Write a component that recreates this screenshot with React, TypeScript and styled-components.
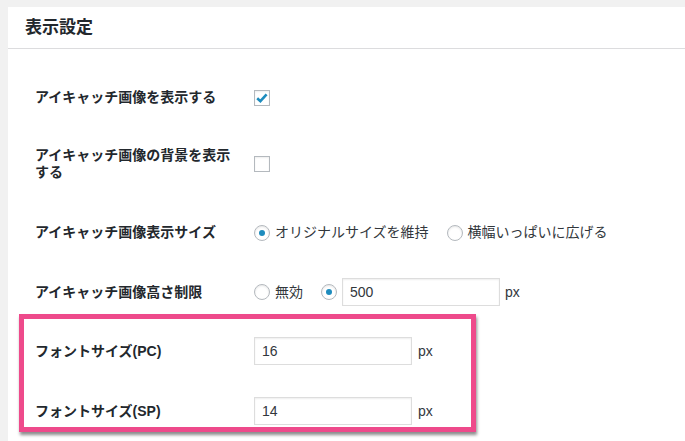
import React from 'react';
import styled, { createGlobalStyle } from 'styled-components';

const GlobalStyle = createGlobalStyle`
    html, body {
        margin: 0;
        padding: 0;
        background: #f1f1f1;
    }
    body {
        font-family: "Liberation Sans", "Noto Sans CJK JP", sans-serif;
        font-size: 14px;
        color: #444;
    }
`

type RowProps = { $py: string }

export default function App() {
    return (
        <>
            <GlobalStyle />
            <Panel>
                <Header>
                    <Title>表示設定</Title>
                </Header>

                <Form>
                    <Row $py='40px 0 22px'>
                        <Label>アイキャッチ画像を表示する</Label>
                        <Controls>
                            <Checkbox $checked>
                                <svg width='14' height='14' viewBox='0 0 14 14'>
                                    <path d='M2.2 7.2 L5.4 10.2 L11.6 3.4' fill='none' stroke='#1e8cbe' strokeWidth='2.6' />
                                </svg>
                            </Checkbox>
                        </Controls>
                    </Row>

                    <Row $py='19px 0 19px'>
                        <Label>アイキャッチ画像の背景を表示する</Label>
                        <Controls>
                            <Checkbox />
                        </Controls>
                    </Row>

                    <Row $py='24px 0 23px'>
                        <Label>アイキャッチ画像表示サイズ</Label>
                        <Controls>
                            <Option>
                                <Radio $checked />
                                <OptionText>オリジナルサイズを維持</OptionText>
                            </Option>
                            <Option>
                                <Radio />
                                <OptionText>横幅いっぱいに広げる</OptionText>
                            </Option>
                        </Controls>
                    </Row>

                    <Row $py='14px 0 8px'>
                        <Label>アイキャッチ画像高さ制限</Label>
                        <Controls>
                            <Option>
                                <Radio />
                                <OptionText>無効</OptionText>
                            </Option>
                            <Option>
                                <Radio $checked />
                                <TextInput>500</TextInput>
                                <Unit>px</Unit>
                            </Option>
                        </Controls>
                    </Row>

                    <Highlight>
                        <Row $py='18px 0 16px'>
                            <Label>フォントサイズ(PC)</Label>
                            <Option>
                                <TextInput>16</TextInput>
                                <Unit $gap={1}>px</Unit>
                            </Option>
                        </Row>
                        <Row $py='16px 0 2px'>
                            <Label>フォントサイズ(SP)</Label>
                            <Option>
                                <TextInput>14</TextInput>
                                <Unit $gap={1}>px</Unit>
                            </Option>
                        </Row>
                    </Highlight>
                </Form>
            </Panel>
        </>
    );
}

const Panel = styled.div`
    margin: 7px 0 0 8px;
    min-height: calc(100vh - 7px);
    background: #fff;
`

const Header = styled.div`
    height: 41px;
    padding-left: 17px;
    display: flex;
    align-items: center;
    border-bottom: 1px solid #dcdcde;
`

const Title = styled.h2`
    margin: 0;
    font-size: 17px;
    font-weight: 600;
    color: #23282d;
    line-height: 1;
    margin-top: -1px;
`

const Form = styled.div`
    padding-left: 27px;
`

const Row = styled.div<RowProps>`
    display: grid;
    grid-template-columns: 219px auto;
    align-items: center;
    padding: ${p => p.$py};
`

const Label = styled.div`
    width: 200px;
    font-size: 14px;
    font-weight: 700;
    line-height: 17px;
    color: #23282d;
`

const Controls = styled.div`
    display: flex;
    align-items: center;
    gap: 18px;
`

const Option = styled.label`
    display: flex;
    align-items: center;
    gap: 5px;
`

const OptionText = styled.span`
    font-size: 14px;
    line-height: 17px;
    color: #32373c;
`

const Checkbox = styled.span<{ $checked?: boolean }>`
    width: 16px;
    height: 16px;
    box-sizing: border-box;
    border: 1px solid #b4b9be;
    background: #fff;
    box-shadow: inset 0 1px 2px rgba(0, 0, 0, 0.07);
    display: flex;
    align-items: center;
    justify-content: center;
`

const Radio = styled.span<{ $checked?: boolean }>`
    width: 16px;
    height: 16px;
    box-sizing: border-box;
    border-radius: 50%;
    border: 1px solid #b4b9be;
    background: #fff;
    box-shadow: inset 0 1px 2px rgba(0, 0, 0, 0.1);
    display: flex;
    align-items: center;
    justify-content: center;

    &::after {
        content: '';
        display: ${p => (p.$checked ? 'block' : 'none')};
        width: 6px;
        height: 6px;
        border-radius: 50%;
        background: #1e8cbe;
    }
`

const TextInput = styled.div`
    width: 158px;
    height: 28px;
    box-sizing: border-box;
    border: 1px solid #ddd;
    box-shadow: inset 0 1px 2px rgba(0, 0, 0, 0.07);
    padding: 0 7px;
    display: flex;
    align-items: center;
    font-size: 14px;
    color: #32373c;
    background: #fff;
`

const Unit = styled.span<{ $gap?: number }>`
    margin-left: ${p => (p.$gap ?? 0)}px;
    font-size: 14px;
    color: #32373c;
`

const Highlight = styled.div`
    width: 457px;
    box-sizing: border-box;
    margin-left: -16px;
    padding-left: 11px;
    border: 5px solid #ee4a8b;
    box-shadow: 1px 3px 3px rgba(0, 0, 0, 0.45);
`
